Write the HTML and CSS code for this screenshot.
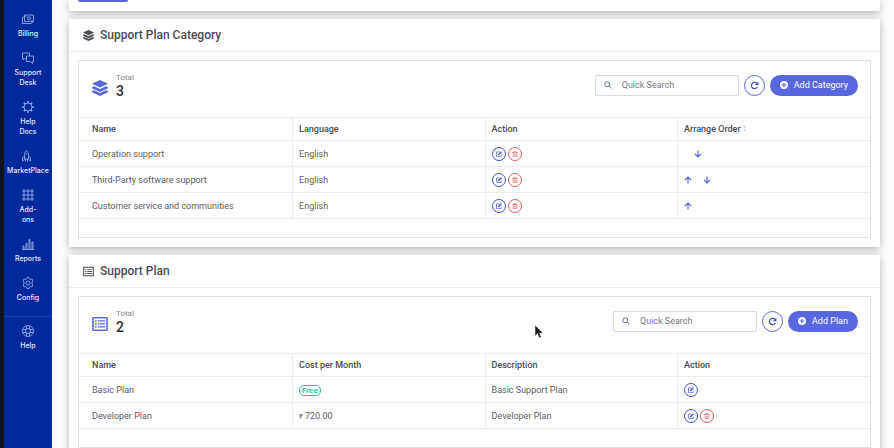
FILE: index.html
```html
<!DOCTYPE html>
<html lang="en">

<head>
  <meta charset="UTF-8">
  <meta name="viewport" content="width=device-width, initial-scale=1.0">
  <title>Support Plans</title>
  <link rel="stylesheet" href="styles.css">
</head>

<body>
  <!-- icon set -->
  <svg class="sprite" aria-hidden="true">
    <symbol id="i-layers" viewBox="0 0 16 16">
      <path d="M8 0L16 3.8 8 7.6 0 3.8z" />
      <path d="M0 7.2l2.2-1L8 9l5.8-2.8 2.2 1v1L8 12 0 8.200z" />
      <path d="M0 11.2l2.200-1L8 13l5.800-2.800 2.200 1v1L8 16 0 12.200z" />
    </symbol>
    <symbol id="i-list" viewBox="0 0 16 14">
      <path d="M1 .8h14v12.400H1z" fill="none" stroke="currentColor" stroke-width="1.600" stroke-linejoin="round" />
      <path d="M3 3.200h1.700v1.500H3zM3 6.200h1.700v1.500H3zM3 9.200h1.700v1.500H3zM6 3.300h7v1.300H6zM6 6.300h7v1.300H6zM6 9.300h7v1.300H6z" />
    </symbol>
    <symbol id="i-search" viewBox="0 0 16 16">
      <path d="M6.500 1.500a5 5 0 1 0 0 10 5 5 0 0 0 0-10zM10.300 10.300L15 15" fill="none" stroke="currentColor" stroke-width="2" />
    </symbol>
    <symbol id="i-reload" viewBox="0 0 16 16">
      <path d="M13 10.500A5.500 5.500 0 1 1 12 4.200" fill="none" stroke="currentColor" stroke-width="2.200" />
      <path d="M15 1v6.500H8.500z" />
    </symbol>
    <symbol id="i-plus" viewBox="0 0 16 16">
      <path fill-rule="evenodd" d="M8 0a8 8 0 1 0 0 16A8 8 0 0 0 8 0zM6.900 3.500h2.200v3.400h3.400v2.200H9.100v3.400H6.900V9.100H3.500V6.900h3.400z" />
    </symbol>
    <symbol id="i-edit" viewBox="0 0 16 16">
      <path d="M9.500 2.500h-8v12h12V9" fill="none" stroke="currentColor" stroke-width="1.800" />
      <path d="M13 .5L15.500 3 8.500 10.500 5 11.500 6 8z" />
    </symbol>
    <symbol id="i-trash" viewBox="0 0 16 16">
      <path d="M1 4h14M5.500 3.500V1h5v2.500M3 4v11h10V4M6.300 7v5M9.700 7v5" fill="none" stroke="currentColor" stroke-width="1.700" />
    </symbol>
    <symbol id="i-up" viewBox="0 0 16 16">
      <path d="M8 15V2M2 8l6-6 6 6" fill="none" stroke="currentColor" stroke-width="2.400" />
    </symbol>
    <symbol id="i-down" viewBox="0 0 16 16">
      <path d="M8 1v13M2 8l6 6 6-6" fill="none" stroke="currentColor" stroke-width="2.400" />
    </symbol>
    <symbol id="i-sort" viewBox="0 0 4 10">
      <path d="M2 1l1.500 2.500h-3zM2 9L.5 6.500h3z" />
    </symbol>
  </svg>

  <div class="shell">
    <nav class="sidebar">
      <a href="#" class="nav-item">
        <svg viewBox="0 0 24 24"><path d="M5 4h18v13H5zM5 7L1 9v12h18l3-4M14 7.500a3 3 0 1 0 0 6 3 3 0 0 0 0-6zM7 7h2M19 14h2" /></svg>
        <span>Billing</span>
      </a>
      <a href="#" class="nav-item">
        <svg viewBox="0 0 24 24"><path d="M9 13H6l-3 3v-3H1V2h14v6M9 8h14v11h-2v4l-4-4H9z" /></svg>
        <span>Support<br>Desk</span>
      </a>
      <a href="#" class="nav-item">
        <svg viewBox="0 0 24 24"><path d="M12 4a8 8 0 1 0 0 16 8 8 0 0 0 0-16z" /><path d="M12 0v4M12 20v4M0 12h4M20 12h4M3.500 3.500l3 3M17.500 17.500l3 3M3.500 20.500l3-3M17.500 6.500l3-3" stroke-width="2.500" /></svg>
        <span>Help<br>Docs</span>
      </a>
      <a href="#" class="nav-item">
        <svg viewBox="0 0 24 24"><path d="M9 1C6 4 5 7 5 11v7h8v-7c0-4-1-7-4-10zM5 12l-4 4v6l4-3M13 12l4 4v6l-4-3M7 18v5M11 18v5M9 7v3" /></svg>
        <span>MarketPlace</span>
      </a>
      <a href="#" class="nav-item">
        <svg viewBox="0 0 24 24"><path d="M2 2h4v4H2zM10 2h4v4h-4zM18 2h4v4h-4zM2 10h4v4H2zM10 10h4v4h-4zM18 10h4v4h-4zM2 18h4v4H2zM10 18h4v4h-4zM18 18h4v4h-4z" /></svg>
        <span>Add-<br>ons</span>
      </a>
      <a href="#" class="nav-item">
        <svg viewBox="0 0 24 24"><path d="M0 23h24M2 22v-6h2v6M8 22V11h2v11M14 22V3h2v19M20 22V8h2v14" /></svg>
        <span>Reports</span>
      </a>
      <a href="#" class="nav-item">
        <svg viewBox="0 0 24 24"><path d="M12 8a4 4 0 1 0 0 8 4 4 0 0 0 0-8zM10 1h4l1 3 2 1 3-1 2 4-2 2v4l2 2-2 4-3-1-2 1-1 3h-4l-1-3-2-1-3 1-2-4 2-2v-4L2 8l2-4 3 1 2-1z" /></svg>
        <span>Config</span>
      </a>
      <hr class="nav-line">
      <a href="#" class="nav-item">
        <svg viewBox="0 0 24 24"><path d="M12 1a11 11 0 1 0 0 22 11 11 0 0 0 0-22zM12 7a5 5 0 1 0 0 10 5 5 0 0 0 0-10zM9 2v6M15 2v6M9 16v6M15 16v6M2 9h6M2 15h6M16 9h6M16 15h6" /></svg>
        <span>Help</span>
      </a>
    </nav>

    <main class="content">
      <section class="card card-top">
        <button class="btn-save" type="button" aria-label="Save"></button>
      </section>

      <section class="card">
        <h2 class="card-title"><svg><use href="#i-layers" /></svg>Support Plan Category</h2>
        <div class="panel">
          <div class="toolbar">
            <svg class="total-icon"><use href="#i-layers" /></svg>
            <div class="total">
              <span>Total</span>
              <strong>3</strong>
            </div>
            <label class="search">
              <svg><use href="#i-search" /></svg>
              <input type="text" placeholder="Quick Search" aria-label="Quick Search">
            </label>
            <button class="btn-reload" type="button" aria-label="Reload"><svg><use href="#i-reload" /></svg></button>
            <button class="btn-add" type="button"><svg><use href="#i-plus" /></svg>Add Category</button>
          </div>
          <table>
            <colgroup>
              <col class="col-name"><col><col><col>
            </colgroup>
            <thead>
              <tr>
                <th>Name</th>
                <th>Language</th>
                <th>Action</th>
                <th>Arrange Order <svg class="sort"><use href="#i-sort" /></svg></th>
              </tr>
            </thead>
            <tbody>
              <tr>
                <td>Operation support</td>
                <td>English</td>
                <td>
                  <div class="actions">
                    <button class="edit" type="button" aria-label="Edit"><svg><use href="#i-edit" /></svg></button>
                    <button class="delete" type="button" aria-label="Delete"><svg><use href="#i-trash" /></svg></button>
                  </div>
                </td>
                <td>
                  <div class="order only-down">
                    <button type="button" aria-label="Move down"><svg><use href="#i-down" /></svg></button>
                  </div>
                </td>
              </tr>
              <tr>
                <td>Third-Party software support</td>
                <td>English</td>
                <td>
                  <div class="actions">
                    <button class="edit" type="button" aria-label="Edit"><svg><use href="#i-edit" /></svg></button>
                    <button class="delete" type="button" aria-label="Delete"><svg><use href="#i-trash" /></svg></button>
                  </div>
                </td>
                <td>
                  <div class="order">
                    <button type="button" aria-label="Move up"><svg><use href="#i-up" /></svg></button>
                    <button type="button" aria-label="Move down"><svg><use href="#i-down" /></svg></button>
                  </div>
                </td>
              </tr>
              <tr>
                <td>Customer service and communities</td>
                <td>English</td>
                <td>
                  <div class="actions">
                    <button class="edit" type="button" aria-label="Edit"><svg><use href="#i-edit" /></svg></button>
                    <button class="delete" type="button" aria-label="Delete"><svg><use href="#i-trash" /></svg></button>
                  </div>
                </td>
                <td>
                  <div class="order">
                    <button type="button" aria-label="Move up"><svg><use href="#i-up" /></svg></button>
                  </div>
                </td>
              </tr>
            </tbody>
          </table>
        </div>
      </section>

      <section class="card">
        <h2 class="card-title"><svg><use href="#i-list" /></svg>Support Plan</h2>
        <div class="panel">
          <div class="toolbar">
            <svg class="total-icon"><use href="#i-list" /></svg>
            <div class="total">
              <span>Total</span>
              <strong>2</strong>
            </div>
            <label class="search">
              <svg><use href="#i-search" /></svg>
              <input type="text" placeholder="Quick Search" aria-label="Quick Search">
            </label>
            <button class="btn-reload" type="button" aria-label="Reload"><svg><use href="#i-reload" /></svg></button>
            <button class="btn-add" type="button"><svg><use href="#i-plus" /></svg>Add Plan</button>
          </div>
          <table>
            <colgroup>
              <col class="col-name"><col><col><col>
            </colgroup>
            <thead>
              <tr>
                <th>Name</th>
                <th>Cost per Month</th>
                <th>Description</th>
                <th>Action</th>
              </tr>
            </thead>
            <tbody>
              <tr>
                <td>Basic Plan</td>
                <td><span class="badge">Free</span></td>
                <td>Basic Support Plan</td>
                <td>
                  <div class="actions">
                    <button class="edit" type="button" aria-label="Edit"><svg><use href="#i-edit" /></svg></button>
                  </div>
                </td>
              </tr>
              <tr>
                <td>Developer Plan</td>
                <td><span class="currency">₹</span> 720.00</td>
                <td>Developer Plan</td>
                <td>
                  <div class="actions">
                    <button class="edit" type="button" aria-label="Edit"><svg><use href="#i-edit" /></svg></button>
                    <button class="delete" type="button" aria-label="Delete"><svg><use href="#i-trash" /></svg></button>
                  </div>
                </td>
              </tr>
            </tbody>
          </table>
          <svg class="pointer" viewBox="0 0 10 16"><path d="M1 1v11l2.500-2.300L5.300 14l2-.9-1.800-4H9z" /></svg>
        </div>
      </section>
    </main>
  </div>
</body>

</html>
```

FILE: styles.css
```css
* {
  box-sizing: border-box;
  padding: 0;
  margin: 0;
}

body {
  font: 9px/12px Roboto, sans-serif;
  color: #5c5d62;
  background-color: #fdfdfd;
}

svg {
  display: block;
  flex: none;
  fill: currentColor;
}

button {
  font: inherit;
  cursor: pointer;
}

.sprite {
  position: absolute;
  width: 0;
  height: 0;
}

.shell {
  display: flex;
  height: 100vh;
  overflow: hidden;
}

/* sidebar */
.sidebar {
  flex: none;
  width: 52px;
  padding-top: 13px;
  border-left: 4px solid #10131c;
  background-color: #002a9c;
}

.nav-item {
  display: flex;
  flex-direction: column;
  align-items: center;
  gap: 4px;
  margin-bottom: 13px;
  font-family: Inter, sans-serif;
  font-size: 7px;
  font-weight: 500;
  line-height: 10px;
  text-align: center;
  text-decoration: none;
  color: #e4e9fa;
}

.nav-item svg {
  width: 12px;
  height: 12px;
  fill: none;
  stroke: #a9b8ea;
  stroke-width: 1.6;
}

.nav-line {
  margin: 0 1px 8px;
  border: 0;
  border-top: 1px solid #1f44ad;
}

/* cards */
.content {
  flex: 1;
  padding: 0 14px 0 17px;
}

.card {
  margin-bottom: 8px;
  padding: 0 9px 9px 9px;
  background-color: #fff;
  box-shadow: 0 2px 8px rgba(0, 0, 0, .3);
}

.card-top {
  height: 11px;
}

.btn-save {
  display: block;
  width: 50px;
  height: 2px;
  border: 0;
  border-radius: 0 0 2px 2px;
  background-color: #5867dd;
}

.card-title {
  display: flex;
  align-items: center;
  gap: 6px;
  height: 33px;
  margin: 0 -9px 8px;
  padding-left: 14px;
  border-bottom: 1px solid #ededf1;
  font-size: 12px;
  font-weight: 500;
  color: #4a4b50;
}

.card-title svg {
  width: 11px;
  height: 11px;
}

.panel {
  position: relative;
  padding-bottom: 18px;
  border: 1px solid #dfe0e4;
}

.toolbar {
  display: flex;
  align-items: center;
  gap: 5px;
  height: 56px;
  padding: 0 12px 8px 13px;
}

.total-icon {
  width: 16px;
  height: 16px;
  margin-top: 5px;
  color: #5867dd;
}

.total {
  flex: 1;
  padding-left: 3px;
}

.total span {
  display: block;
  font-size: 8px;
  color: #85868d;
}

.total strong {
  display: block;
  font-size: 14px;
  line-height: 14px;
  font-weight: 500;
  color: #2b2c33;
}

.search {
  display: flex;
  align-items: center;
  width: 144px;
  height: 21px;
  padding-left: 8px;
  border: 1px solid #d8dae4;
  border-radius: 2px;
}

.search svg {
  width: 8px;
  height: 8px;
  color: #6470a0;
}

.search input {
  width: 100%;
  margin-left: 10px;
  border: 0;
  outline: 0;
  font: inherit;
  background: none;
}

.search input::placeholder {
  color: #77787f;
}

.btn-reload {
  display: flex;
  align-items: center;
  justify-content: center;
  width: 21px;
  height: 21px;
  border: 1px solid #5867dd;
  border-radius: 50%;
  color: #4252b8;
  background-color: #fff;
}

.btn-reload svg {
  width: 9px;
  height: 9px;
}

.btn-add {
  display: flex;
  align-items: center;
  gap: 6px;
  height: 21px;
  padding: 0 10px;
  border: 0;
  border-radius: 11px;
  color: #fff;
  background-color: #5867dd;
}

.btn-add svg {
  width: 8px;
  height: 8px;
}

/* tables */
table {
  width: 100%;
  table-layout: fixed;
  border-collapse: collapse;
}

.col-name {
  width: 27%;
}

tr {
  height: 26px;
  border-bottom: 1px solid #ebecf0;
}

thead tr {
  height: 23px;
  border-top: 1px solid #ebecf0;
}

th,
td {
  padding: 0 6px;
  border-left: 1px solid #ebecf0;
  text-align: left;
}

th {
  font-weight: 500;
  color: #4a4b50;
}

th:first-child,
td:first-child {
  padding-left: 13px;
  border-left: 0;
}

.sort {
  display: inline-block;
  width: 3px;
  height: 7px;
  color: #b5b7c0;
}

.actions {
  display: flex;
  gap: 2px;
}

.actions button {
  display: flex;
  align-items: center;
  justify-content: center;
  width: 14px;
  height: 14px;
  border: 1px solid currentColor;
  border-radius: 50%;
  background-color: #fff;
}

.actions svg {
  width: 6px;
  height: 6px;
}

.actions .edit {
  color: #3d50c3;
}

.actions .delete {
  color: #d0605e;
}

.order {
  display: flex;
  gap: 11px;
}

.only-down {
  padding-left: 10px;
}

.order button {
  border: 0;
  background: none;
  color: #5867dd;
}

.order svg {
  width: 8px;
  height: 8px;
}

.badge {
  display: inline-block;
  padding: 0 2px;
  border: 1px solid #34bfa3;
  border-radius: 5px;
  font-size: 8px;
  line-height: 9px;
  font-weight: 500;
  color: #2dba8c;
}

.currency {
  font-size: 7px;
  line-height: 1;
}

.pointer {
  position: absolute;
  left: 455px;
  top: 27px;
  width: 10px;
  height: 16px;
  fill: #1c1c1c;
  stroke: #fff;
  stroke-width: .5;
}
```
